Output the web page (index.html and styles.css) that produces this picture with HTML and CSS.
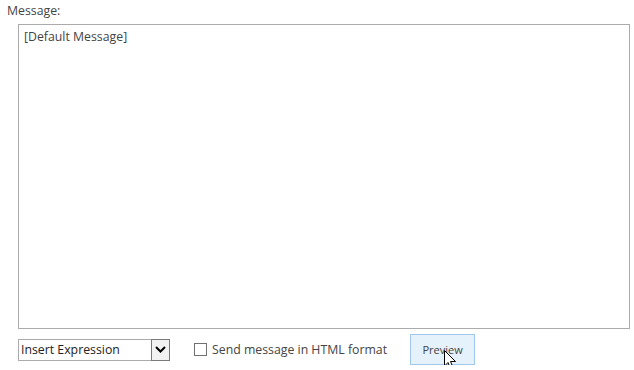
FILE: index.html
```html
<!DOCTYPE html>
<html lang="en">
<head>
    <meta charset="UTF-8">
    <title>Message</title>
    <link rel="stylesheet" href="styles.css">
</head>
<body>
    <div class="form">
        <label class="field-label" for="message">Message:</label>
        <div class="message-box" id="message">[Default Message]</div>

        <div class="toolbar">
            <div class="select">
                <span class="select-text">Insert Expression</span>
                <span class="select-arrow">
                    <svg width="11" height="7" viewBox="0 0 11 7"><path d="M1 1 L5.5 5.5 L10 1" fill="none" stroke="#000" stroke-width="2"/></svg>
                </span>
            </div>
            <label class="check">
                <span class="check-box"></span>
                <span>Send message in HTML format</span>
            </label>
            <button class="preview">Preview
                <svg class="cursor" width="13" height="20" viewBox="0 0 13 20"><path d="M0.5 0.5 V16 L4 12.5 L6.5 18.5 L9 17.5 L6.5 11.5 H11.5 Z" fill="#fff" stroke="#000" stroke-width="1" stroke-linejoin="round"/></svg>
            </button>
        </div>
    </div>
</body>
</html>
```

FILE: styles.css
```css
body {
    margin: 0;
    background: #ffffff;
    font-family: "Open Sans", "Liberation Sans", sans-serif;
    font-size: 12.3px;
    color: #444444;
}

.form {
    padding: 2px 4px 0 7px;
}

.field-label {
    display: block;
    line-height: 18px;
    color: #444444;
}

.message-box {
    margin: 4px 0 0 11px;
    width: 600px;
    height: 295px;
    border: 1px solid #ababab;
    padding: 3px 5px 5px 5px;
    color: #444444;
    line-height: 17px;
}

.toolbar {
    display: flex;
    align-items: center;
    margin: 5px 0 0 11px;
}

.select {
    display: flex;
    width: 150px;
    height: 20px;
    border: 1px solid #ababab;
    box-sizing: content-box;
}

.select-text {
    flex: 1;
    line-height: 20px;
    padding-left: 2px;
    color: #222222;
}

.select-arrow {
    width: 17px;
    border: 1px solid #7a7a7a;
    margin: -1px -1px -1px 0;
    background: #f2f2f2;
    display: flex;
    align-items: center;
    justify-content: center;
}

.check {
    display: flex;
    align-items: center;
    margin-left: 24px;
    color: #444444;
}

.check-box {
    width: 11px;
    height: 11px;
    border: 1px solid #707070;
    margin-right: 5px;
}

.preview {
    position: relative;
    margin-left: 23px;
    width: 65px;
    height: 31px;
    border: 1px solid #9fc8eb;
    background: #e5f1fb;
    font-family: "Open Sans", "Liberation Sans", sans-serif;
    font-size: 11px;
    color: #444444;
    padding: 0;
}

.cursor {
    position: absolute;
    left: 33px;
    top: 15px;
}
```
